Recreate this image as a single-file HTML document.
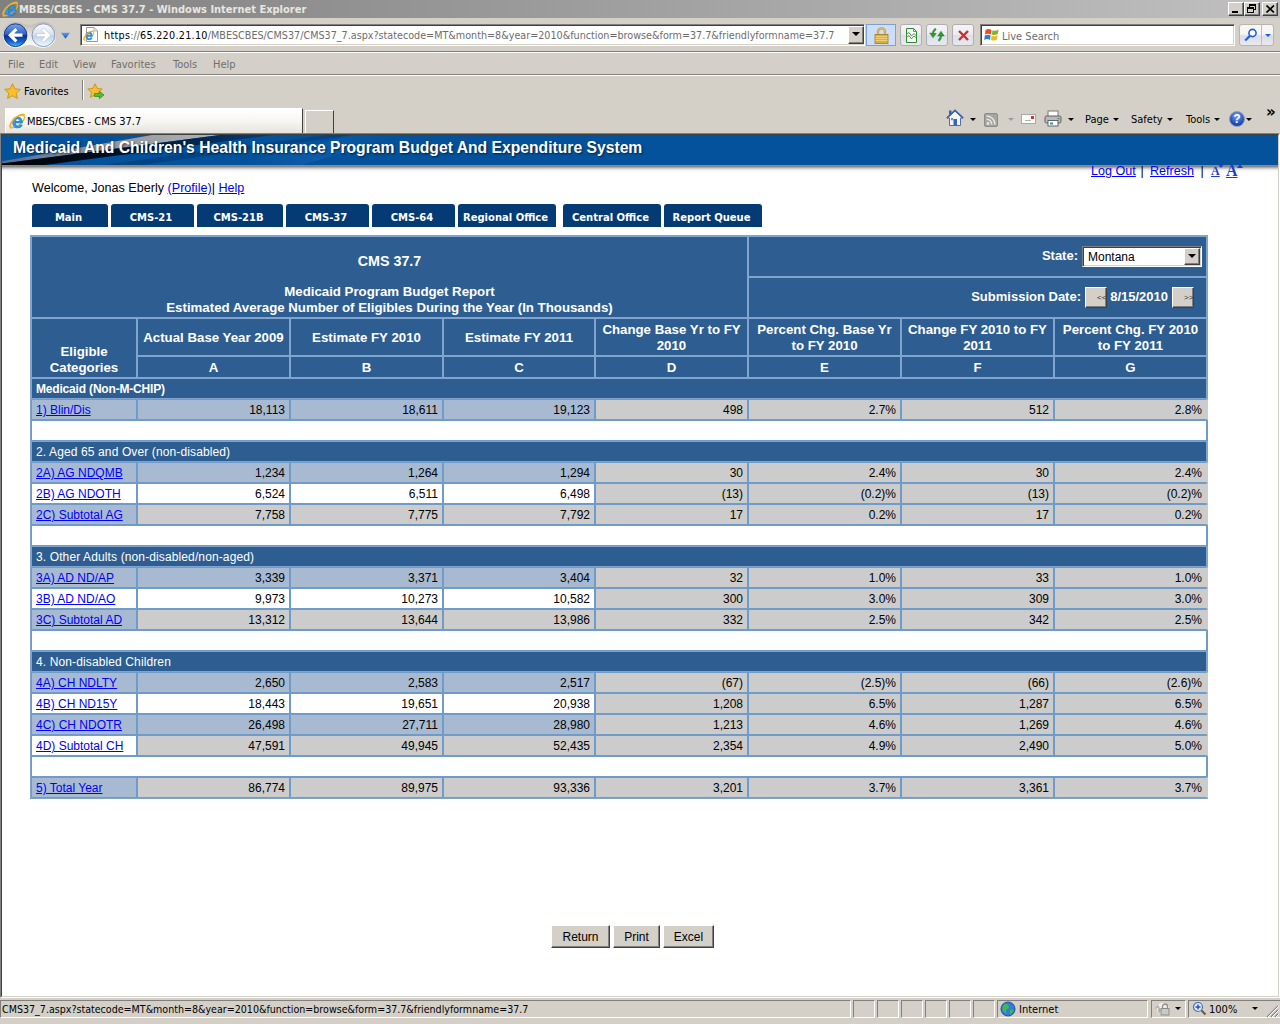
<!DOCTYPE html>
<html lang="en">
<head>
<meta charset="utf-8">
<title>MBES/CBES - CMS 37.7 - Windows Internet Explorer</title>
<style>
*{box-sizing:border-box;margin:0;padding:0}
html,body{width:1280px;height:1024px;overflow:hidden;background:#d4d0c8}
body{position:relative;font-family:"DejaVu Sans Condensed","DejaVu Sans","Liberation Sans",sans-serif;font-size:11px;color:#000}
.abs{position:absolute}
/* ---------- window chrome ---------- */
#titlebar{position:absolute;left:0;top:0;width:1280px;height:18px;background:linear-gradient(90deg,#808080,#c0c0c0)}
#titlebar .t{position:absolute;left:19px;top:2px;font-weight:bold;font-size:11px;line-height:16px;color:#e8e6e0;white-space:nowrap}
.wb{position:absolute;top:2px;width:16px;height:14px;background:#d4d0c8;border:1px solid;border-color:#fff #404040 #404040 #fff;box-shadow:inset -1px -1px 0 #808080}
#navbar{position:absolute;left:0;top:18px;width:1280px;height:33px;background:#d4d0c8}
.sep{position:absolute;left:0;width:1280px;height:2px;border-top:1px solid #808080;border-bottom:1px solid #fff}
#addr{position:absolute;left:80px;top:24px;width:785px;height:22px;background:#fff;border:1px solid;border-color:#808080 #fff #fff #808080;box-shadow:inset 1px 1px 0 #404040,inset -1px -1px 0 #d4d0c8}
#addr .u{position:absolute;left:23px;top:2px;line-height:18px;font-size:10.700px;white-space:nowrap;color:#6d6d6d}
#addr .u b{font-weight:normal;color:#000;letter-spacing:.3px}
.ddb{position:absolute;width:16px;height:17px;background:#d4d0c8;border:1px solid;border-color:#fff #404040 #404040 #fff;box-shadow:inset -1px -1px 0 #808080}
.ddb:after{content:"";position:absolute;left:3px;top:5px;border:4px solid transparent;border-top:4px solid #000;border-bottom:0}
.tbtn{position:absolute;top:24px;width:22px;height:22px;border:1px solid #adadb5;border-radius:3px;background:linear-gradient(#f5f5f6 0,#ececf0 48%,#dcdfea 52%,#e8e9f0 100%)}
#search{position:absolute;left:980px;top:24px;width:255px;height:22px;background:#fff;border:1px solid;border-color:#808080 #fff #fff #808080;box-shadow:inset 1px 1px 0 #404040,inset -1px -1px 0 #d4d0c8}
#search span{position:absolute;left:21px;top:3px;line-height:18px;color:#6d6d6d;font-size:11px}
#menubar{position:absolute;left:0;top:53px;width:1280px;height:21px}
#menubar span{position:absolute;top:5px;line-height:14px;color:#6f6f6f;font-size:11px}
#favbar span.l{position:absolute;left:24px;top:85px;line-height:14px;font-size:11px}
.tab{position:absolute;left:5px;top:108px;width:298px;height:25px;border:1px solid #fff;border-bottom:0;border-right:1px solid #404040;background:linear-gradient(#ffffff,#f6f5f2 55%,#e6e3dc)}
.tab span{position:absolute;left:21px;top:6px;line-height:14px;font-size:11px}
.newtab{position:absolute;left:305px;top:110px;width:29px;height:23px;border:1px solid #fff;border-bottom:0;border-right-color:#404040;background:#d4d0c8}
.cmd{position:absolute;top:113px;line-height:14px;font-size:11px}
.arr{position:absolute;width:0;height:0;border:3px solid transparent;border-top:3px solid #000;border-bottom:0}
/* ---------- page frame ---------- */
#frame{position:absolute;left:0;top:133px;width:1280px;height:865px;border:1px solid;border-color:#808080 #fff #fff #808080;pointer-events:none}
#frame i{position:absolute;left:0;top:0;right:0;bottom:0;border:1px solid;border-color:#404040 #d4d0c8 #d4d0c8 #404040}
#page{position:absolute;left:2px;top:135px;width:1276px;height:861px;background:#fff;overflow:hidden;font-family:"Liberation Sans",Arial,sans-serif}
#banner{position:absolute;left:0;top:0;width:1276px;height:30px;background:#04529c}
#banner .bt{position:absolute;left:11px;top:3px;font-family:"Liberation Sans",sans-serif;font-weight:bold;font-size:15.7px;line-height:20px;color:#fff;white-space:nowrap;text-shadow:1px 1px 2px rgba(0,0,0,.6)}
#bshadow{position:absolute;left:0;top:30px;width:1276px;height:8px;background:linear-gradient(rgba(20,30,50,.52) 0,rgba(0,0,0,.47) 1.5px,rgba(0,0,0,.33) 2.5px,rgba(0,0,0,.2) 3.5px,rgba(0,0,0,.1) 4.5px,rgba(0,0,0,.04) 5.5px,rgba(0,0,0,0) 7.5px)}
a{color:#0000ff}
#welcome{position:absolute;left:30px;top:46px;font-size:12.6px;line-height:15px;white-space:nowrap}
.tl{position:absolute;top:29px;font-size:12.6px;line-height:15px;white-space:nowrap}
.tl.fa{font-family:"Liberation Serif",serif;font-weight:bold}
.tl.fa a{color:#1a3fd0}
.nt{position:absolute;top:69px;height:23px;background:#043b75;color:#fff;font-family:"DejaVu Sans","DejaVu Sans Condensed",sans-serif;font-weight:bold;font-size:10px;line-height:27px;text-align:center;border-radius:3px 3px 0 0;white-space:nowrap;padding-right:3px}

/* ---------- grid ---------- */
#grid{position:absolute;left:28px;top:100px;width:1178px;table-layout:fixed;border-collapse:separate;border-spacing:0;border:1px solid #7fa5cf;border-right:0;font-size:12px;color:#000}
#grid td{border:1px solid #6e9bc8;padding:2px 4px 0;overflow:hidden;white-space:nowrap;vertical-align:top}
#grid td.hd{background:#2e5e91;border-color:#7fa5cf;color:#fff;font-weight:bold;font-size:13.25px;text-align:center;white-space:normal;line-height:16px;padding:0 2px;vertical-align:middle}
#grid tr.h3 td.hd,#grid tr.h4 td.hd{padding-top:1px}
#grid tr.h1{height:41px}#grid tr.h2{height:41px}#grid tr.h3{height:38px}#grid tr.h4{height:22px}
#grid tr.r{height:21px}
#grid td:last-child{border-right-width:2px}
#grid tr.r td.n:last-child{border-right-color:#ccc}
#grid td.title{vertical-align:top}
.t1{margin-top:16px;font-size:14.3px;line-height:17px}
.t2{margin-top:14px;font-size:13.25px;line-height:16px}
.t3{font-size:13.25px;line-height:16px}
#grid td.ctl{padding:0;vertical-align:top}
.cw{position:relative;height:39px;width:100%}
#grid td.elig{vertical-align:bottom;padding-bottom:1px;font-size:13.25px}
#grid td.sec{background:#2e5e91;border-color:#7fa5cf;color:#fff;letter-spacing:.12px}
#grid td.sec.b{font-weight:bold;letter-spacing:-.18px}
#grid td.blank{background:#fff}
#grid td.lb{background:#a7bad1}
#grid td.lw{background:#fff}
#grid td.g{background:#cccccc}
#grid td.n{text-align:right}
#grid td{line-height:17px}
.lbl{position:absolute;font-size:13px;line-height:16px;white-space:nowrap}
.sel{position:absolute;width:120px;height:21px;background:#fff;border:1px solid;border-color:#808080 #fff #fff #808080;box-shadow:inset 1px 1px 0 #404040,inset -1px -1px 0 #d4d0c8;text-align:left}
.sv{position:absolute;left:5px;top:2px;line-height:16px;font-weight:normal;font-size:12px;color:#000;font-family:"Liberation Sans",sans-serif}
.sb{position:absolute;right:1px;top:1px;width:16px;height:17px;background:#d4d0c8;border:1px solid;border-color:#fff #404040 #404040 #fff;box-shadow:inset -1px -1px 0 #808080}
.sb:after{content:"";position:absolute;left:3px;top:5px;border:4px solid transparent;border-top:4px solid #000;border-bottom:0}
.btn{position:absolute;width:22px;height:21px;background:#d4d0c8;border:1px solid;border-color:#fff #404040 #404040 #fff;box-shadow:inset -1px -1px 0 #808080;overflow:hidden}
.btn b{position:absolute;left:11px;top:4px;color:#333;font-weight:normal;font-size:8px;line-height:11px;white-space:nowrap;font-family:"Liberation Sans",sans-serif}
.pbtn{position:absolute;top:790px;height:23px;background:#d4d0c8;border:1px solid;border-color:#fff #404040 #404040 #fff;box-shadow:inset -1px -1px 0 #808080;font-size:12px;line-height:22px;text-align:center;color:#000}
/* ---------- statusbar ---------- */
#status{position:absolute;left:0;top:998px;width:1280px;height:26px;background:#d4d0c8}
.pane{position:absolute;top:1000px;height:18px;border:1px solid;border-color:#808080 #fff #fff #808080}
</style>
</head>
<body>

<div id="titlebar"><div class="t">MBES/CBES - CMS 37.7 - Windows Internet Explorer</div></div>
<svg class="abs" style="left:2px;top:1px" width="17" height="16" viewBox="0 0 17 16"><ellipse cx="8.5" cy="8.3" rx="8.6" ry="3.9" transform="rotate(-40 8.5 8.3)" fill="none" stroke="#f2b21d" stroke-width="1.3"/><text x="2.8" y="14.6" font-family="Liberation Sans,sans-serif" font-weight="bold" font-size="20" fill="#2d9bea" stroke="#1c6fcb" stroke-width=".5">e</text><path d="M15.8 1.6 C11 .2 3.500 5.500 1.300 11.500 C.6 13.500 1.200 15 2.800 15.200" fill="none" stroke="#f2b21d" stroke-width="1.500"/></svg>
<div class="wb" style="left:1228px"><i style="position:absolute;left:3px;top:8px;width:6px;height:2px;background:#000"></i></div>
<div class="wb" style="left:1244px"><i style="position:absolute;left:4px;top:1px;width:7px;height:6px;border:1px solid #000;border-top-width:2px"></i><i style="position:absolute;left:2px;top:4px;width:7px;height:6px;border:1px solid #000;border-top-width:2px;background:#d4d0c8"></i></div>
<div class="wb" style="left:1262px"><svg style="position:absolute;left:3px;top:2px" width="9" height="8" viewBox="0 0 9 8"><path d="M0.5 0.5L8 7.5M8 0.5L0.5 7.5" stroke="#000" stroke-width="1.7"/></svg></div>
<div id="navbar"></div>
<!-- back / forward -->
<svg class="abs" style="left:0;top:19px" width="74" height="32" viewBox="-2 -2 74 32">
 <defs>
  <linearGradient id="gb" x1="0" y1="0" x2="0" y2="1"><stop offset="0" stop-color="#7aa6e4"/><stop offset=".46" stop-color="#2f62c0"/><stop offset=".52" stop-color="#0b2b98"/><stop offset=".8" stop-color="#1868cf"/><stop offset="1" stop-color="#4cc0f7"/></linearGradient>
  <linearGradient id="gf" x1="0" y1="0" x2="0" y2="1"><stop offset="0" stop-color="#f7f9fd"/><stop offset=".46" stop-color="#d9e2f0"/><stop offset=".52" stop-color="#c3d1e7"/><stop offset="1" stop-color="#e8fcff"/></linearGradient>
  <linearGradient id="gp" x1="0" y1="0" x2="0" y2="1"><stop offset="0" stop-color="#b9b6ad"/><stop offset=".5" stop-color="#e6e4de"/><stop offset="1" stop-color="#ffffff"/></linearGradient>
  <linearGradient id="gd" x1="0" y1="0" x2="0" y2="1"><stop offset="0" stop-color="#5aa2ea"/><stop offset="1" stop-color="#1c4fb8"/></linearGradient>
 </defs>
 <path d="M13.500 1 C20 1 22 4.300 27.500 4.300 C33 4.300 35 1 41.500 1 A13.200 13.200 0 0 1 41.500 27.400 C35 27.400 33 24.400 27.500 24.400 C22 24.400 20 27.400 13.500 27.400 A13.200 13.200 0 0 1 13.500 1Z" fill="url(#gp)" stroke="#c9c6bd" stroke-width=".8"/>
 <circle cx="13.500" cy="14.200" r="11.400" fill="url(#gb)" stroke="#0c2c8c" stroke-width=".9"/>
 <path d="M6 14.200 L13.300 7 L15.400 9.200 L12.100 12.600 H20.500 V15.800 H12.100 L15.400 19.200 L13.300 21.400Z" fill="#fff"/>
 <circle cx="41.400" cy="14.200" r="11.400" fill="url(#gf)" stroke="#8592ab" stroke-width=".9"/>
 <path d="M48.900 14.200 L41.600 7 L39.500 9.200 L42.800 12.600 H34.400 V15.800 H42.800 L39.500 19.200 L41.600 21.400Z" fill="#fff" stroke="#b9c4d6" stroke-width=".7"/>
 <path d="M59 11.700 H68 L63.500 17.700Z" fill="url(#gd)"/>
</svg>
<div id="addr"><svg class="abs" style="left:4px;top:1px" width="14" height="17" viewBox="0 0 14 17"><path d="M1.500 1.500H9L12.500 5V15.500H1.500Z" fill="#fff" stroke="#9a9a9a"/><path d="M9 1.500V5H12.500" fill="none" stroke="#b5b5b5"/></svg><svg class="abs" style="left:2px;top:5px" width="12" height="11" viewBox="0 0 17 16"><ellipse cx="8.5" cy="8.3" rx="8.6" ry="3.9" transform="rotate(-40 8.5 8.3)" fill="none" stroke="#f2b21d" stroke-width="1.3"/><text x="2.8" y="14.6" font-family="Liberation Sans,sans-serif" font-weight="bold" font-size="20" fill="#2d9bea" stroke="#1c6fcb" stroke-width=".5">e</text><path d="M15.8 1.6 C11 .2 3.500 5.500 1.300 11.500 C.6 13.500 1.200 15 2.800 15.200" fill="none" stroke="#f2b21d" stroke-width="1.500"/></svg><div class="u"><b>https</b>://<b>65.220.21.10</b>/MBESCBES/CMS37/CMS37_7.aspx?statecode=MT&amp;month=8&amp;year=2010&amp;function=browse&amp;form=37.7&amp;friendlyformname=37.7</div><div class="ddb" style="right:0;top:1px;height:18px"></div></div>
<div class="abs" style="left:866px;top:24px;width:30px;height:22px;background:#cbdffd;border:1px solid #7da2ce"><svg style="position:absolute;left:7px;top:2px" width="15" height="17" viewBox="0 0 15 17"><path d="M4 8 V4.800 A3.500 3.500 0 0 1 11 4.800 V8" fill="none" stroke="#c39a35" stroke-width="2.300"/><path d="M4 8 V4.800 A3.500 3.500 0 0 1 11 4.800 V8" fill="none" stroke="#e7cf86" stroke-width=".8"/><rect x="1" y="7.500" width="13" height="9" fill="#dcae3a" stroke="#a87a14" stroke-width=".8"/><path d="M1.500 9.500H13.500M1.500 11.500H13.500M1.500 13.500H13.500" stroke="#f0d27a" stroke-width=".9"/></svg>
</div>
<div class="tbtn" style="left:900px"><svg style="position:absolute;left:4px;top:3px" width="13" height="15" viewBox="0 0 13 15"><path d="M1.500 .5H8.500L11.500 3.500V14.500H1.500Z" fill="#fff" stroke="#2c8a2c"/><path d="M8.500 .5V3.500H11.500" fill="none" stroke="#2c8a2c" stroke-width=".8"/><path d="M1.500 6.500 L4 4.500 L6.500 8 L9 5.500 L11.500 8 V10 L9 8 L6.500 10.800 L4 7.500 L1.500 9.500Z" fill="#fff" stroke="#2c8a2c" stroke-width=".9"/></svg></div>
<div class="tbtn" style="left:926px"><svg style="position:absolute;left:2px;top:3px" width="17" height="15" viewBox="-1 -1 17 15"><path d="M5.800 -.3 C3.800 1.200 3 3 3 5.200" fill="none" stroke="#2f9a2f" stroke-width="2.200"/><path d="M-.3 4 L6.300 4.500 L3 8.700Z" fill="#2f9a2f" stroke="#1f7a1f" stroke-width=".5"/><path d="M8.500 11.800 C10.300 10.400 11 8.500 11 6.500" fill="none" stroke="#2f9a2f" stroke-width="2.200"/><path d="M7.700 7 L14.300 7 L11 2.300Z" fill="#2f9a2f" stroke="#1f7a1f" stroke-width=".5"/></svg></div>
<div class="tbtn" style="left:952px"><svg style="position:absolute;left:5px;top:5px" width="11" height="11" viewBox="0 0 11 11"><path d="M1 1L10 10M10 1L1 10" stroke="#c9302f" stroke-width="2.400"/></svg></div>
<div id="search"><svg style="position:absolute;left:3px;top:2px" width="16" height="16" viewBox="0 0 16 16"><path d="M1.500 3 Q4.500 1 7.500 3 L6.800 7.500 Q4 5.800 1 7.500Z" fill="#e8501f"/><path d="M8.500 3.200 Q11.500 4.500 14.500 2.500 L13.800 7 Q11 8.800 7.800 7.500Z" fill="#7cb82f"/><path d="M.8 8.500 Q3.800 6.800 6.600 8.500 L6 13 Q3.200 11.200 .2 13Z" fill="#2f7fd6"/><path d="M7.600 8.600 Q10.600 10 13.600 8 L13 12.500 Q10 14.300 7 13Z" fill="#f5b81c"/></svg><span>Live Search</span></div>
<div class="abs" style="left:1239px;top:24px;width:35px;height:22px;border:1px solid #b9b5ab;border-radius:3px;background:linear-gradient(#f6f6f4 45%,#dcdde6 55%,#e9e9ee)">
 <i style="position:absolute;left:21px;top:0;width:1px;height:20px;background:#c2bfb6"></i>
 <svg style="position:absolute;left:4px;top:3px" width="14" height="14" viewBox="0 0 14 14"><circle cx="8.500" cy="5" r="3.600" fill="#fff" stroke="#1f5fe0" stroke-width="1.600"/><path d="M6 7.800 L1.200 12.500" stroke="#1f5fe0" stroke-width="2.200"/></svg>
 <i class="arr" style="left:25px;top:9px;border-top-color:#1f5fe0"></i>
</div>
<div class="sep" style="top:51px"></div>
<div id="menubar"><span style="left:8px">File</span><span style="left:39px">Edit</span><span style="left:73px">View</span><span style="left:111px">Favorites</span><span style="left:173px">Tools</span><span style="left:213px">Help</span></div>
<div class="sep" style="top:74px"></div>
<div id="favbar">
 <svg class="abs" style="left:4px;top:83px" width="17" height="16" viewBox="0 0 17 16"><path d="M8.500 .8 L10.900 5.800 L16.300 6.400 L12.300 10.100 L13.400 15.400 L8.500 12.700 L3.600 15.400 L4.700 10.100 L.7 6.400 L6.100 5.800Z" fill="#f7c02b" stroke="#d18d12" stroke-width=".9"/></svg>
 <span class="l">Favorites</span>
 <i class="abs" style="left:82px;top:80px;width:1px;height:20px;background:#808080"></i><i class="abs" style="left:83px;top:80px;width:1px;height:20px;background:#fff"></i>
 <svg class="abs" style="left:87px;top:83px" width="18" height="17" viewBox="0 0 18 17"><path d="M8 .8 L10.200 5.400 L15.200 6 L11.500 9.400 L12.500 14.300 L8 11.800 L3.500 14.300 L4.500 9.400 L.8 6 L5.800 5.400Z" fill="#f7c02b" stroke="#d18d12" stroke-width=".9"/><path d="M7.500 10.500 H12.500 V8.300 L17 12 L12.500 15.700 V13.500 H7.500Z" fill="#4fc12f" stroke="#2d8a18" stroke-width=".7"/></svg>
</div>
<div class="tab"><svg class="abs" style="left:3px;top:4px" width="17" height="16" viewBox="0 0 17 16"><ellipse cx="8.5" cy="8.3" rx="8.6" ry="3.9" transform="rotate(-40 8.5 8.3)" fill="none" stroke="#f2b21d" stroke-width="1.3"/><text x="2.8" y="14.6" font-family="Liberation Sans,sans-serif" font-weight="bold" font-size="20" fill="#2d9bea" stroke="#1c6fcb" stroke-width=".5">e</text><path d="M15.8 1.6 C11 .2 3.500 5.500 1.300 11.500 C.6 13.500 1.200 15 2.800 15.200" fill="none" stroke="#f2b21d" stroke-width="1.500"/></svg><span>MBES/CBES - CMS 37.7</span></div>
<div class="newtab"></div>

<!-- command bar -->
<svg class="abs" style="left:946px;top:109px" width="18" height="18" viewBox="0 0 18 18"><path d="M1 9 L9 1.500 L17 9 H14.500 V16.500 H3.500 V9Z" fill="#f4f4f0" stroke="#5a6f9a" stroke-width="1"/><path d="M.8 9.200 L9 1.300 L17.200 9.200" fill="none" stroke="#3b5ea8" stroke-width="1.600"/><rect x="3" y="1.500" width="2.500" height="4" fill="#3b5ea8"/><rect x="7.500" y="10" width="3.500" height="6.500" fill="#3465c0"/><rect x="5" y="9" width="2.200" height="2.200" fill="#6b8fd0"/></svg>
<i class="arr" style="left:970px;top:118px"></i>
<div class="abs" style="left:984px;top:113px;width:14px;height:14px;background:#a5a5a1;border:1px solid #8a8a86;border-radius:2px"><svg width="12" height="12" viewBox="0 0 12 12"><circle cx="3" cy="9.500" r="1.400" fill="#e8e8e4"/><path d="M1.600 5.200 A5.200 5.200 0 0 1 6.800 10.400M1.600 2 A8.400 8.400 0 0 1 10 10.400" fill="none" stroke="#e8e8e4" stroke-width="1.500"/></svg></div>
<i class="arr" style="left:1008px;top:118px;border-top-color:#9a9a96"></i>
<div class="abs" style="left:1021px;top:114px;width:15px;height:10px;background:#fbfbfa;border:1px solid #a9a9a5"><i style="position:absolute;right:1px;top:1px;width:3px;height:3px;background:#d9342b"></i><i style="position:absolute;left:3px;top:5px;width:6px;height:1px;background:#b0b0ac"></i></div>
<svg class="abs" style="left:1044px;top:110px" width="18" height="17" viewBox="0 0 18 17"><rect x="4" y="1" width="10" height="6" fill="#fff" stroke="#777"/><rect x="1" y="6" width="16" height="7" rx="1.500" fill="#b9b9bd" stroke="#5f5f66"/><rect x="4" y="10.500" width="10" height="5.500" fill="#fff" stroke="#666"/><rect x="6" y="12.500" width="3" height="2" fill="#2a9a9a"/><rect x="13.500" y="8" width="2" height="1.200" fill="#3a3"/></svg>
<i class="arr" style="left:1068px;top:118px"></i>
<span class="cmd" style="left:1085px">Page</span><i class="arr" style="left:1113px;top:118px"></i>
<span class="cmd" style="left:1131px">Safety</span><i class="arr" style="left:1167px;top:118px"></i>
<span class="cmd" style="left:1186px">Tools</span><i class="arr" style="left:1214px;top:118px"></i>
<div class="abs" style="left:1229px;top:111px;width:16px;height:16px;border-radius:8px;background:radial-gradient(circle at 50% 30%,#7fa6ee,#2450c0 60%,#0f2f8e);border:1px solid #8c98b8;color:#fff;font:bold 12px/14px 'Liberation Sans',sans-serif;text-align:center">?</div>
<i class="arr" style="left:1246px;top:118px"></i>
<span class="abs" style="left:1266px;top:103px;font:bold 15px/18px 'DejaVu Sans',sans-serif">&raquo;</span>
<div id="page">
  <div id="banner"><svg class="abs" style="left:0;top:0" width="420" height="30" viewBox="0 0 420 31" preserveAspectRatio="none"><defs><linearGradient id="sw1" x1="0" x2="1"><stop offset="0" stop-color="#4f6f9a"/><stop offset=".45" stop-color="#8d949e"/><stop offset="1" stop-color="#b4b4b4"/></linearGradient><linearGradient id="sw2" x1="0" x2="1"><stop offset="0" stop-color="#000"/><stop offset=".5" stop-color="#01152f"/><stop offset="1" stop-color="#033f7c"/></linearGradient><linearGradient id="sw3" x1="0" x2="1"><stop offset="0" stop-color="#0a5cab" stop-opacity="0"/><stop offset=".5" stop-color="#1264b4"/><stop offset="1" stop-color="#0a5cab" stop-opacity="0"/></linearGradient></defs><path d="M0 27 L150 0 L218 0 L0 29.500Z" fill="url(#sw1)"/><path d="M0 29.500 L218 0 L272 0 L43 31 L0 31Z" fill="url(#sw2)"/><path d="M100 31 L325 0 L350 0 L140 31Z" fill="#012a5c" opacity=".35"/><path d="M232 31 L352 0 L400 0 L300 31Z" fill="url(#sw3)" opacity=".6"/></svg><div class="bt">Medicaid And Children's Health Insurance Program Budget And Expenditure System</div></div>
  <div id="bshadow"></div>

  <div id="welcome">Welcome, Jonas Eberly <a href="#">(Profile)</a>| <a href="#">Help</a></div>
  <div class="tl" style="left:1089px"><a href="#">Log Out</a></div><div class="tl" style="left:1138.500px">|</div><div class="tl" style="left:1148px"><a href="#">Refresh</a></div><div class="tl" style="left:1198.500px">|</div><div class="tl fa" style="left:1209px;font-size:12px"><a href="#">A</a></div><i class="arr" style="left:1216px;top:29px;border-width:4px 3px 0;border-top-color:#1a3fd0"></i><div class="tl fa" style="left:1224px;top:27.500px;font-size:16px"><a href="#">A</a></div><i class="arr" style="left:1235px;top:29px;border-width:0 3px 4px;border-top:0;border-bottom:4px solid #1a3fd0"></i>
  <div class="nt" style="left:30px;width:76px">Main</div>
  <div class="nt" style="left:109px;width:83px">CMS-21</div>
  <div class="nt" style="left:195px;width:86px">CMS-21B</div>
  <div class="nt" style="left:284px;width:83px">CMS-37</div>
  <div class="nt" style="left:370px;width:83px">CMS-64</div>
  <div class="nt" style="left:456px;width:98px">Regional Office</div>
  <div class="nt" style="left:561px;width:98px">Central Office</div>
  <div class="nt" style="left:662px;width:98px">Report Queue</div>
<table id="grid" cellspacing="0" cellpadding="0">
<colgroup><col style="width:106px"><col style="width:153px"><col style="width:153px"><col style="width:152px"><col style="width:153px"><col style="width:153px"><col style="width:153px"><col style="width:154px"></colgroup>
<tr class="h1"><td colspan="5" rowspan="2" class="hd title"><div class="t1">CMS 37.7</div><div class="t2">Medicaid Program Budget Report</div><div class="t3">Estimated Average Number of Eligibles During the Year (In Thousands)</div></td><td colspan="3" class="hd ctl"><div class="cw"><span class="lbl" style="right:128px;top:11px">State:</span><span class="sel" style="right:4px;top:9px"><span class="sv">Montana</span><span class="sb"></span></span></div></td></tr>
<tr class="h2"><td colspan="3" class="hd ctl"><div class="cw"><span class="lbl" style="right:125px;top:11px">Submission Date:</span><span class="btn" style="right:99px;top:9px"><b>&lt;&lt;</b></span><span class="lbl" style="right:38px;top:11px">8/15/2010</span><span class="btn" style="right:12px;top:9px"><b>&gt;&gt;</b></span></div></td></tr>
<tr class="h3"><td rowspan="2" class="hd elig">Eligible<br>Categories</td><td class="hd">Actual Base Year 2009</td><td class="hd">Estimate FY 2010</td><td class="hd">Estimate FY 2011</td><td class="hd">Change Base Yr to FY 2010</td><td class="hd">Percent Chg. Base Yr to FY 2010</td><td class="hd">Change FY 2010 to FY 2011</td><td class="hd">Percent Chg. FY 2010 to FY 2011</td></tr>
<tr class="h4"><td class="hd">A</td><td class="hd">B</td><td class="hd">C</td><td class="hd">D</td><td class="hd">E</td><td class="hd">F</td><td class="hd">G</td></tr>
<tr class="r"><td colspan="8" class="sec b">Medicaid (Non-M-CHIP)</td></tr>
<tr class="r"><td class="lb"><a href="#">1) Blin/Dis</a></td><td class="n lb">18,113</td><td class="n lb">18,611</td><td class="n lb">19,123</td><td class="n g">498</td><td class="n g">2.7%</td><td class="n g">512</td><td class="n g">2.8%</td></tr>
<tr class="r"><td colspan="8" class="blank"></td></tr>
<tr class="r"><td colspan="8" class="sec">2. Aged 65 and Over (non-disabled)</td></tr>
<tr class="r"><td class="lb"><a href="#">2A) AG NDQMB</a></td><td class="n lb">1,234</td><td class="n lb">1,264</td><td class="n lb">1,294</td><td class="n g">30</td><td class="n g">2.4%</td><td class="n g">30</td><td class="n g">2.4%</td></tr>
<tr class="r"><td class="lw"><a href="#">2B) AG NDOTH</a></td><td class="n lw">6,524</td><td class="n lw">6,511</td><td class="n lw">6,498</td><td class="n g">(13)</td><td class="n g">(0.2)%</td><td class="n g">(13)</td><td class="n g">(0.2)%</td></tr>
<tr class="r"><td class="lb"><a href="#">2C) Subtotal AG</a></td><td class="n g">7,758</td><td class="n g">7,775</td><td class="n g">7,792</td><td class="n g">17</td><td class="n g">0.2%</td><td class="n g">17</td><td class="n g">0.2%</td></tr>
<tr class="r"><td colspan="8" class="blank"></td></tr>
<tr class="r"><td colspan="8" class="sec">3. Other Adults (non-disabled/non-aged)</td></tr>
<tr class="r"><td class="lb"><a href="#">3A) AD ND/AP</a></td><td class="n lb">3,339</td><td class="n lb">3,371</td><td class="n lb">3,404</td><td class="n g">32</td><td class="n g">1.0%</td><td class="n g">33</td><td class="n g">1.0%</td></tr>
<tr class="r"><td class="lw"><a href="#">3B) AD ND/AO</a></td><td class="n lw">9,973</td><td class="n lw">10,273</td><td class="n lw">10,582</td><td class="n g">300</td><td class="n g">3.0%</td><td class="n g">309</td><td class="n g">3.0%</td></tr>
<tr class="r"><td class="lb"><a href="#">3C) Subtotal AD</a></td><td class="n g">13,312</td><td class="n g">13,644</td><td class="n g">13,986</td><td class="n g">332</td><td class="n g">2.5%</td><td class="n g">342</td><td class="n g">2.5%</td></tr>
<tr class="r"><td colspan="8" class="blank"></td></tr>
<tr class="r"><td colspan="8" class="sec">4. Non-disabled Children</td></tr>
<tr class="r"><td class="lb"><a href="#">4A) CH NDLTY</a></td><td class="n lb">2,650</td><td class="n lb">2,583</td><td class="n lb">2,517</td><td class="n g">(67)</td><td class="n g">(2.5)%</td><td class="n g">(66)</td><td class="n g">(2.6)%</td></tr>
<tr class="r"><td class="lw"><a href="#">4B) CH ND15Y</a></td><td class="n lw">18,443</td><td class="n lw">19,651</td><td class="n lw">20,938</td><td class="n g">1,208</td><td class="n g">6.5%</td><td class="n g">1,287</td><td class="n g">6.5%</td></tr>
<tr class="r"><td class="lb"><a href="#">4C) CH NDOTR</a></td><td class="n lb">26,498</td><td class="n lb">27,711</td><td class="n lb">28,980</td><td class="n g">1,213</td><td class="n g">4.6%</td><td class="n g">1,269</td><td class="n g">4.6%</td></tr>
<tr class="r"><td class="lw"><a href="#">4D) Subtotal CH</a></td><td class="n g">47,591</td><td class="n g">49,945</td><td class="n g">52,435</td><td class="n g">2,354</td><td class="n g">4.9%</td><td class="n g">2,490</td><td class="n g">5.0%</td></tr>
<tr class="r"><td colspan="8" class="blank"></td></tr>
<tr class="r"><td class="lb"><a href="#">5) Total Year</a></td><td class="n g">86,774</td><td class="n g">89,975</td><td class="n g">93,336</td><td class="n g">3,201</td><td class="n g">3.7%</td><td class="n g">3,361</td><td class="n g">3.7%</td></tr>
</table>
  <div class="pbtn" style="left:549px;width:59px">Return</div>
  <div class="pbtn" style="left:611px;width:47px">Print</div>
  <div class="pbtn" style="left:661px;width:51px">Excel</div>
</div>
<div id="frame"><i></i></div>
<div id="status">
  <span class="abs" style="left:2px;top:4px;font-size:10.600px;line-height:14px;white-space:nowrap">CMS37_7.aspx?statecode=MT&amp;month=8&amp;year=2010&amp;function=browse&amp;form=37.7&amp;friendlyformname=37.7</span>
</div>
<div class="pane" style="left:0;width:851px"></div>
<div class="pane" style="left:853px;width:22px"></div>
<div class="pane" style="left:877px;width:22px"></div>
<div class="pane" style="left:901px;width:22px"></div>
<div class="pane" style="left:925px;width:22px"></div>
<div class="pane" style="left:949px;width:22px"></div>
<div class="pane" style="left:973px;width:22px"></div>
<div class="pane" style="left:997px;width:151px"><svg style="position:absolute;left:2px;top:0" width="16" height="16" viewBox="0 0 16 16"><circle cx="8" cy="8" r="7" fill="#2f7fd8" stroke="#1b4f9c"/><path d="M4 3.500 Q7 2 8.500 4.500 Q10 7 7 8 Q5 9.500 6.500 12.500 Q4 12 2.500 9 Q2 5.500 4 3.500Z M10.500 8.500 Q13 8 13.500 10 Q12 13 10 13.500 Q9.500 11 10.500 8.500Z" fill="#49b649"/></svg><span style="position:absolute;left:21px;top:2px;line-height:14px;font-size:11px">Internet</span></div>
<div class="pane" style="left:1151px;width:35px"><svg style="position:absolute;left:3px;top:1px" width="16" height="14" viewBox="0 0 16 14"><circle cx="8" cy="7" r="6.300" fill="#efeeea"/><path d="M.5 6.500 L3 4 L5 8 L3.800 7.600 Q3.500 9.500 5 11" fill="none" stroke="#a9a9a5" stroke-width="1.300"/><rect x="6" y="6.500" width="8" height="6.500" fill="#c9c9c5" stroke="#8d8d89"/><path d="M7.500 6.500 V4.500 A2.500 2.500 0 0 1 12.500 4.500 V6.500" fill="none" stroke="#8d8d89" stroke-width="1.300"/></svg><i class="arr" style="left:23px;top:6px"></i></div>
<div class="pane" style="left:1188px;width:94px"><svg style="position:absolute;left:3px;top:0" width="15" height="15" viewBox="0 0 15 15"><circle cx="6" cy="6" r="4.500" fill="#dfeaf8" stroke="#4d6ea8" stroke-width="1.200"/><path d="M9.500 9.500 L13.500 13.500" stroke="#6a5a3a" stroke-width="2"/><path d="M3.500 6H8.500M6 3.500V8.500" stroke="#2450c0" stroke-width="1.400"/></svg><span style="position:absolute;left:20px;top:2px;line-height:14px;font-size:11px">100%</span><i class="arr" style="left:63px;top:6px"></i></div>
<svg class="abs" style="left:1266px;top:1005px" width="13" height="13" viewBox="0 0 13 13"><path d="M12 1L1 12M12 5L5 12M12 9L9 12" stroke="#808080" stroke-width="1.200"/><path d="M13 1L2 12M13 5L6 12M13 9L10 12" stroke="#fff" stroke-width="1"/></svg>
</body>
</html>
